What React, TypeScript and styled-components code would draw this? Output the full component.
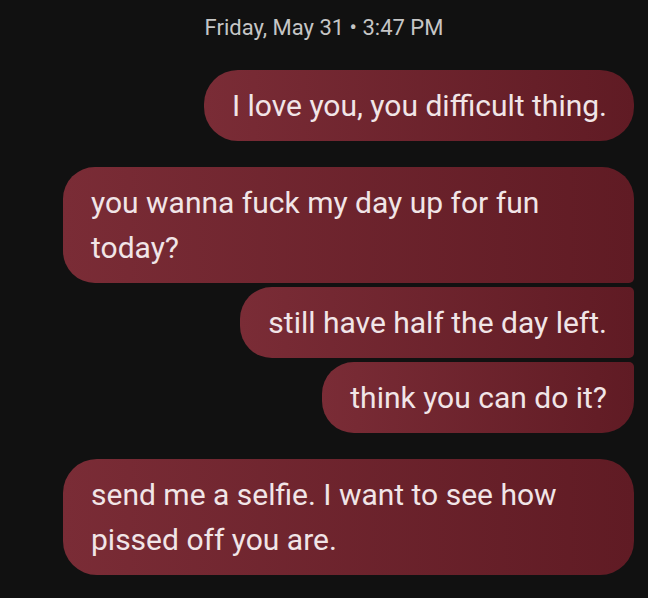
import React from "react";
import styled, { createGlobalStyle } from "styled-components";

const Global = createGlobalStyle`
  html, body {
    margin: 0;
    padding: 0;
    background: #111111;
  }
  body {
    font-family: Roboto, "Noto Sans", "Liberation Sans", sans-serif;
  }
`;

type Corner = "round" | "top" | "middle" | "bottom";

const radii: Record<Corner, string> = {
  round: "34px",
  top: "32px 32px 5px 32px",
  middle: "32px 5px 5px 32px",
  bottom: "32px 5px 32px 32px",
};

const Screen = styled.div`
  width: 648px;
  height: 598px;
  overflow: hidden;
  background: #111111;
  padding: 14px 14px 0 0;
  box-sizing: border-box;
  display: flex;
  flex-direction: column;
`;

const Stamp = styled.div`
  padding-left: 14px;
  text-align: center;
  font-size: 22px;
  line-height: 28px;
  color: #c6c6c6;
  margin-bottom: 28px;
`;

const Group = styled.div`
  display: flex;
  flex-direction: column;
  align-items: flex-end;
  gap: 4px;
  margin-bottom: 26px;
`;

const Bubble = styled.div<{ $corner: Corner }>`
  max-width: 571px;
  box-sizing: border-box;
  padding: 13px 27px 13px 28px;
  border-radius: ${(p) => radii[p.$corner]};
  background: linear-gradient(to right, #7a2c36, #601b24);
  color: #f1e5e7;
  font-size: 30px;
  line-height: 45px;
`;

export default function App() {
  return (
    <>
      <Global />
      <Screen>
        <Stamp>Friday, May 31 • 3:47 PM</Stamp>
        <Group>
          <Bubble $corner="round">I love you, you difficult thing.</Bubble>
        </Group>
        <Group>
          <Bubble $corner="top">you wanna fuck my day up for fun today?</Bubble>
          <Bubble $corner="middle">still have half the day left.</Bubble>
          <Bubble $corner="bottom">think you can do it?</Bubble>
        </Group>
        <Group>
          <Bubble $corner="round">
            send me a selfie. I want to see how pissed off you are.
          </Bubble>
        </Group>
      </Screen>
    </>
  );
}
